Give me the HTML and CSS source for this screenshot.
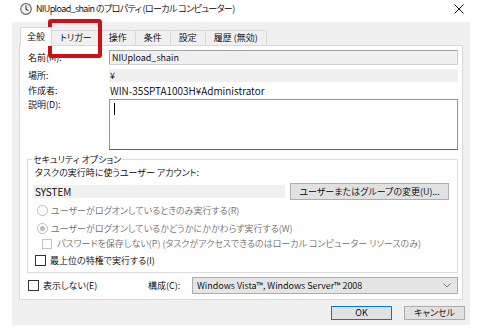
FILE: index.html
```html
<!DOCTYPE html>
<html lang="ja">
<head>
    <meta charset="UTF-8">
    <title>NIUpload_shain のプロパティ</title>
    <link rel="stylesheet" href="styles.css">
</head>
<body>
    <div class="titlebar">
        <svg class="app-icon" width="12" height="12" viewBox="0 0 12 12">
            <circle cx="6" cy="6" r="5.3" fill="#f4f4f4" stroke="#6f6f6f" stroke-width="1.2"/>
            <path d="M6 2.6V6.2L8.4 7.6" fill="none" stroke="#333" stroke-width="1.1"/>
        </svg>
        <span class="title">NIUpload_shain のプロパティ (ローカル コンピューター)</span>
        <svg class="close" width="10" height="10" viewBox="0 0 10 10">
            <path d="M0.5 0.5L9.5 9.5M9.5 0.5L0.5 9.5" stroke="#111" stroke-width="1"/>
        </svg>
    </div>

    <div class="window">
        <div class="tabs">
            <div class="tab active">全般</div>
            <div class="tab">トリガー</div>
            <div class="tab">操作</div>
            <div class="tab">条件</div>
            <div class="tab">設定</div>
            <div class="tab">履歴 (無効)</div>
        </div>

        <div class="panel">
            <div class="field-row">
                <div class="label">名前(M):</div>
                <div class="textbox">NIUpload_shain</div>
            </div>
            <div class="field-row row-location">
                <div class="label">場所:</div>
                <div class="readonly">¥</div>
            </div>
            <div class="field-row row-author">
                <div class="label">作成者:</div>
                <div class="value">WIN-35SPTA1003H¥Administrator</div>
            </div>
            <div class="field-row row-desc">
                <div class="label">説明(D):</div>
                <div class="textarea"><span class="caret"></span></div>
            </div>

            <fieldset class="group">
                <legend>セキュリティ オプション</legend>
                <div class="group-text">タスクの実行時に使うユーザー アカウント:</div>
                <div class="account-row">
                    <div class="account">SYSTEM</div>
                    <button class="btn btn-user">ユーザーまたはグループの変更(U)...</button>
                </div>
                <div class="option option-r disabled">
                    <span class="radio"></span>
                    <span>ユーザーがログオンしているときのみ実行する(R)</span>
                </div>
                <div class="option option-w disabled">
                    <span class="radio checked"></span>
                    <span>ユーザーがログオンしているかどうかにかかわらず実行する(W)</span>
                </div>
                <div class="option option-p disabled">
                    <span class="check"></span>
                    <span>パスワードを保存しない(P) (タスクがアクセスできるのはローカル コンピューター リソースのみ)</span>
                </div>
                <div class="option option-i">
                    <span class="check"></span>
                    <span>最上位の特権で実行する(I)</span>
                </div>
            </fieldset>

            <div class="bottom-row">
                <div class="option option-hide">
                    <span class="check"></span>
                    <span>表示しない(E)</span>
                </div>
                <div class="config-label">構成(C):</div>
                <div class="select">
                    <span>Windows Vista™, Windows Server™ 2008</span>
                    <svg width="8" height="5" viewBox="0 0 8 5">
                        <path d="M0.5 0.5L4 4L7.5 0.5" fill="none" stroke="#777" stroke-width="1"/>
                    </svg>
                </div>
            </div>
        </div>

        <div class="footer">
            <button class="btn btn-ok">OK</button>
            <button class="btn btn-cancel">キャンセル</button>
        </div>
    </div>

    <div class="highlight"></div>
</body>
</html>
```

FILE: styles.css
```css
body {
    margin: 0;
    background: #fff;
    font-family: "Noto Sans CJK JP", sans-serif;
    font-size: 9px;
    font-weight: 350;
    line-height: 13px;
    font-feature-settings: "palt";
    color: #000;
    position: relative;
}

/* title bar */
.titlebar {
    height: 22px;
    display: flex;
    align-items: flex-start;
    padding: 3px 16px 0 20px;
    box-sizing: border-box;
}
.app-icon {
    flex: none;
}
.title {
    margin-left: 4px;
    font-size: 9px;
    line-height: 12px;
    letter-spacing: -0.6px;
}
.close {
    margin-left: auto;
    margin-top: 1px;
}

/* dialog body */
.window {
    margin: 0 10px 0 12px;
    height: 303px;
    background: #f0f0f0;
}
.tabs {
    height: 23px;
    display: flex;
    align-items: flex-end;
    padding-left: 8px;
}
.tab {
    height: 15px;
    line-height: 14px;
    padding: 0 8px;
    border: 1px solid #d9d9d9;
    border-bottom: none;
    margin-left: -1px;
    box-sizing: border-box;
}
.tab.active {
    height: 19px;
    line-height: 17px;
    margin-left: 0;
    margin-bottom: -1px;
    padding: 0 6px;
    background: #fff;
    position: relative;
    z-index: 1;
}
.panel {
    margin: 0 7px;
    height: 255px;
    background: #fff;
    border: 1px solid #d9d9d9;
    box-sizing: border-box;
    padding: 4px 4px 0 8px;
}

/* general fields */
.field-row {
    display: flex;
    align-items: center;
}
.label {
    width: 81px;
    flex: none;
}
.textbox {
    flex: 1;
    height: 15px;
    line-height: 13px;
    padding-left: 2px;
    background: #f0f0f0;
    border: 1px solid #a5a5a5;
    border-right-color: #cfcfcf;
    border-bottom-color: #cfcfcf;
    box-sizing: border-box;
}
.row-location {
    margin-top: 4px;
}
.readonly {
    flex: 1;
    height: 13px;
    padding-left: 1px;
    background: #f0f0f0;
}
.row-author {
    margin-top: 1px;
    height: 14px;
}
.value {
    padding-left: 1px;
    font-size: 10px;
}
.row-desc {
    margin-top: 2px;
    align-items: flex-start;
}
.row-desc .label {
    margin-top: -1px;
}
.textarea {
    flex: 1;
    height: 51px;
    border: 1px solid #5a9fe0;
    border-bottom-color: #0078d7;
    box-sizing: border-box;
    padding: 3px 0 0 4px;
}
.caret {
    display: block;
    width: 1px;
    height: 12px;
    background: #000;
}

/* security group */
.group {
    margin: 3px 0 0 -1px;
    padding: 0 0 5px 5px;
    border: 1px solid #dcdcdc;
}
.group legend {
    padding: 0 1px;
    margin-left: -1px;
    line-height: 13px;
}
.group-text {
    margin-left: 2px;
}
.account-row {
    display: flex;
    align-items: center;
    gap: 5px;
    margin-top: 4px;
}
.account {
    width: 252px;
    height: 13px;
    padding-left: 2px;
    box-sizing: border-box;
    background: #f0f0f0;
    font-size: 10px;
}
.btn {
    font: inherit;
    color: #000;
    background: #e1e1e1;
    border: 1px solid #adadad;
    padding: 0;
    margin: 0;
    box-sizing: border-box;
}
.btn-user {
    width: 159px;
    height: 17px;
    line-height: 15px;
}
.option {
    display: flex;
    align-items: center;
    height: 13px;
    gap: 4px;
    white-space: nowrap;
}
.option.disabled {
    color: #6d6d6d;
}
.option-r {
    margin: 4px 0 0 4px;
    gap: 3px;
}
.option-w {
    margin: 5px 0 0 4px;
    gap: 3px;
}
.option-p {
    margin: 2px 0 0 9px;
    gap: 5px;
}
.option-i {
    margin: 4px 0 0 2px;
}
.radio {
    width: 11px;
    height: 11px;
    border: 1px solid #bcbcbc;
    border-radius: 50%;
    box-sizing: border-box;
    display: flex;
    align-items: center;
    justify-content: center;
    flex: none;
}
.radio.checked::after {
    content: "";
    width: 5px;
    height: 5px;
    border-radius: 50%;
    background: #bcbcbc;
}
.check {
    width: 11px;
    height: 11px;
    border: 1px solid #333;
    box-sizing: border-box;
    background: #fff;
    flex: none;
}
.disabled .check {
    width: 10px;
    height: 10px;
    border-color: #c4c4c4;
}

/* bottom row */
.bottom-row {
    display: flex;
    align-items: center;
    height: 17px;
    margin-top: 4px;
}
.option-hide {
    width: 120px;
    flex: none;
}
.config-label {
    width: 44px;
    flex: none;
}
.select {
    flex: 1;
    height: 17px;
    background: #e5e5e5;
    border: 1px solid #adadad;
    box-sizing: border-box;
    display: flex;
    align-items: center;
    justify-content: space-between;
    padding: 0 6px 0 4px;
}

/* dialog buttons */
.footer {
    display: flex;
    justify-content: flex-end;
    gap: 12px;
    padding: 6px 5px 0 0;
}
.btn-ok,
.btn-cancel {
    width: 61px;
    height: 14px;
    line-height: 12px;
}
.btn-ok {
    border-color: #0078d7;
}

/* red annotation over the trigger tab */
.highlight {
    position: absolute;
    left: 48px;
    top: 19px;
    width: 54px;
    height: 39px;
    border: 4px solid #cc1018;
    border-radius: 3px;
    box-sizing: border-box;
}
```
